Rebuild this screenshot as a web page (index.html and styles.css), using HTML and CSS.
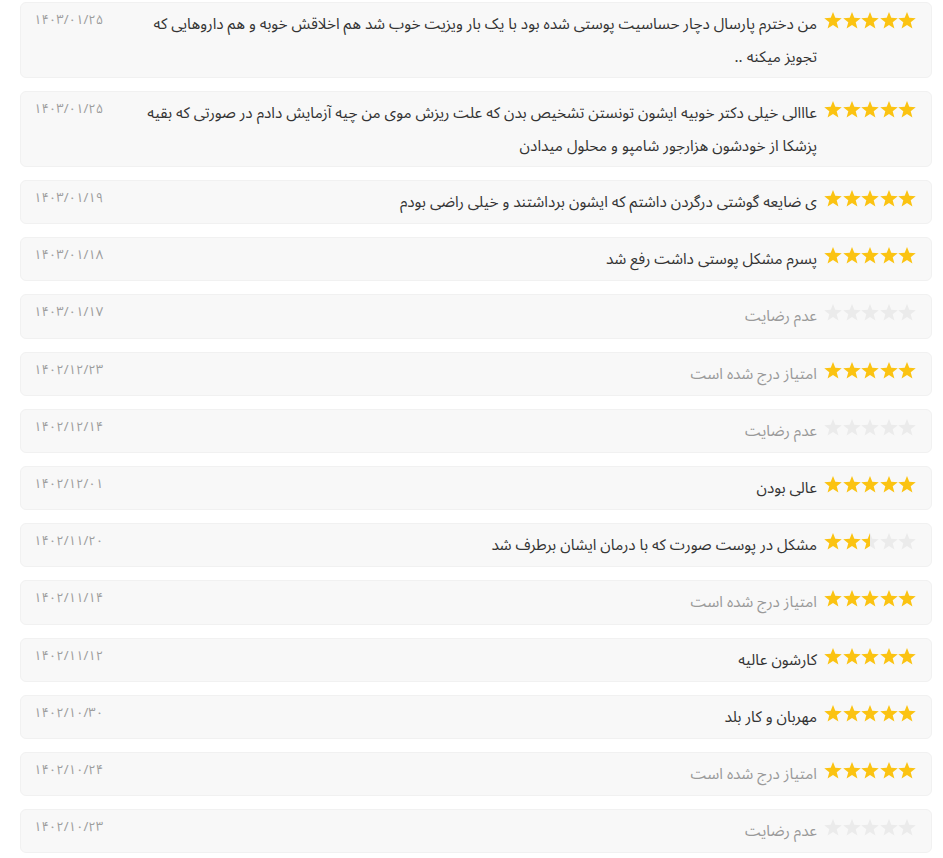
FILE: index.html
```html
<!DOCTYPE html>
<html lang="fa" dir="rtl">
<head>
<meta charset="utf-8">
<title>نظرات</title>
<link rel="stylesheet" href="styles.css">
</head>
<body>
<svg width="0" height="0" class="defs" aria-hidden="true">
  <defs>
    <linearGradient id="half" x1="0" x2="1" y1="0" y2="0">
      <stop offset="50%" stop-color="#fbc312"/>
      <stop offset="50%" stop-color="#ebebeb"/>
    </linearGradient>
    <symbol id="star" viewBox="0 0 18 17">
      <polygon points="9,0 11.29,5.84 17.75,6.16 12.71,10.21 14.41,16.44 9,12.9 3.59,16.44 5.29,10.21 0.25,6.16 6.71,5.84"/>
    </symbol>
  </defs>
</svg>
<main class="reviews">

  <div class="card">
    <div class="stars"><svg class="on"><use href="#star"/></svg><svg class="on"><use href="#star"/></svg><svg class="on"><use href="#star"/></svg><svg class="on"><use href="#star"/></svg><svg class="on"><use href="#star"/></svg></div>
    <p class="text">من دخترم پارسال دچار حساسیت پوستی شده بود با یک بار ویزیت خوب شد هم اخلاقش خوبه و هم داروهایی که<br>تجویز میکنه ..</p>
    <div class="date"><span>۱۴۰۳/۰۱/۲۵</span></div>
  </div>

  <div class="card">
    <div class="stars"><svg class="on"><use href="#star"/></svg><svg class="on"><use href="#star"/></svg><svg class="on"><use href="#star"/></svg><svg class="on"><use href="#star"/></svg><svg class="on"><use href="#star"/></svg></div>
    <p class="text">عااالی خیلی دکتر خوبیه ایشون تونستن تشخیص بدن که علت ریزش موی من چیه آزمایش دادم در صورتی که بقیه<br>پزشکا از خودشون هزارجور شامپو و محلول میدادن</p>
    <div class="date"><span>۱۴۰۳/۰۱/۲۵</span></div>
  </div>

  <div class="card">
    <div class="stars"><svg class="on"><use href="#star"/></svg><svg class="on"><use href="#star"/></svg><svg class="on"><use href="#star"/></svg><svg class="on"><use href="#star"/></svg><svg class="on"><use href="#star"/></svg></div>
    <p class="text">ی ضایعه گوشتی درگردن داشتم که ایشون برداشتند و خیلی راضی بودم</p>
    <div class="date"><span>۱۴۰۳/۰۱/۱۹</span></div>
  </div>

  <div class="card">
    <div class="stars"><svg class="on"><use href="#star"/></svg><svg class="on"><use href="#star"/></svg><svg class="on"><use href="#star"/></svg><svg class="on"><use href="#star"/></svg><svg class="on"><use href="#star"/></svg></div>
    <p class="text">پسرم مشکل پوستی داشت رفع شد</p>
    <div class="date"><span>۱۴۰۳/۰۱/۱۸</span></div>
  </div>

  <div class="card">
    <div class="stars"><svg><use href="#star"/></svg><svg><use href="#star"/></svg><svg><use href="#star"/></svg><svg><use href="#star"/></svg><svg><use href="#star"/></svg></div>
    <p class="text muted">عدم رضایت</p>
    <div class="date"><span>۱۴۰۳/۰۱/۱۷</span></div>
  </div>

  <div class="card">
    <div class="stars"><svg class="on"><use href="#star"/></svg><svg class="on"><use href="#star"/></svg><svg class="on"><use href="#star"/></svg><svg class="on"><use href="#star"/></svg><svg class="on"><use href="#star"/></svg></div>
    <p class="text muted">امتیاز درج شده است</p>
    <div class="date"><span>۱۴۰۲/۱۲/۲۳</span></div>
  </div>

  <div class="card">
    <div class="stars"><svg><use href="#star"/></svg><svg><use href="#star"/></svg><svg><use href="#star"/></svg><svg><use href="#star"/></svg><svg><use href="#star"/></svg></div>
    <p class="text muted">عدم رضایت</p>
    <div class="date"><span>۱۴۰۲/۱۲/۱۴</span></div>
  </div>

  <div class="card">
    <div class="stars"><svg class="on"><use href="#star"/></svg><svg class="on"><use href="#star"/></svg><svg class="on"><use href="#star"/></svg><svg class="on"><use href="#star"/></svg><svg class="on"><use href="#star"/></svg></div>
    <p class="text">عالی بودن</p>
    <div class="date"><span>۱۴۰۲/۱۲/۰۱</span></div>
  </div>

  <div class="card">
    <div class="stars"><svg class="on"><use href="#star"/></svg><svg class="on"><use href="#star"/></svg><svg class="half"><use href="#star"/></svg><svg><use href="#star"/></svg><svg><use href="#star"/></svg></div>
    <p class="text">مشکل در پوست صورت که با درمان ایشان برطرف شد</p>
    <div class="date"><span>۱۴۰۲/۱۱/۲۰</span></div>
  </div>

  <div class="card">
    <div class="stars"><svg class="on"><use href="#star"/></svg><svg class="on"><use href="#star"/></svg><svg class="on"><use href="#star"/></svg><svg class="on"><use href="#star"/></svg><svg class="on"><use href="#star"/></svg></div>
    <p class="text muted">امتیاز درج شده است</p>
    <div class="date"><span>۱۴۰۲/۱۱/۱۴</span></div>
  </div>

  <div class="card">
    <div class="stars"><svg class="on"><use href="#star"/></svg><svg class="on"><use href="#star"/></svg><svg class="on"><use href="#star"/></svg><svg class="on"><use href="#star"/></svg><svg class="on"><use href="#star"/></svg></div>
    <p class="text">کارشون عالیه</p>
    <div class="date"><span>۱۴۰۲/۱۱/۱۲</span></div>
  </div>

  <div class="card">
    <div class="stars"><svg class="on"><use href="#star"/></svg><svg class="on"><use href="#star"/></svg><svg class="on"><use href="#star"/></svg><svg class="on"><use href="#star"/></svg><svg class="on"><use href="#star"/></svg></div>
    <p class="text">مهربان و کار بلد</p>
    <div class="date"><span>۱۴۰۲/۱۰/۳۰</span></div>
  </div>

  <div class="card">
    <div class="stars"><svg class="on"><use href="#star"/></svg><svg class="on"><use href="#star"/></svg><svg class="on"><use href="#star"/></svg><svg class="on"><use href="#star"/></svg><svg class="on"><use href="#star"/></svg></div>
    <p class="text muted">امتیاز درج شده است</p>
    <div class="date"><span>۱۴۰۲/۱۰/۲۴</span></div>
  </div>

  <div class="card">
    <div class="stars"><svg><use href="#star"/></svg><svg><use href="#star"/></svg><svg><use href="#star"/></svg><svg><use href="#star"/></svg><svg><use href="#star"/></svg></div>
    <p class="text muted">عدم رضایت</p>
    <div class="date"><span>۱۴۰۲/۱۰/۲۳</span></div>
  </div>

</main>
</body>
</html>
```

FILE: styles.css
```css
html, body {
  margin: 0;
  padding: 0;
  background: #ffffff;
}

body {
  font-family: "Noto Sans Arabic", "DejaVu Sans", sans-serif;
  color: #333333;
}

.defs {
  position: absolute;
  width: 0;
  height: 0;
  overflow: hidden;
}

.reviews {
  padding: 2px 11px 0 20px;
  display: flex;
  flex-direction: column;
  gap: 13px;
}

.card {
  display: flex;
  align-items: flex-start;
  box-sizing: border-box;
  min-height: 44.2px;
  padding: 5px 15px 3px 13px;
  background: #f8f8f8;
  border: 1px solid #f1f1f1;
  border-radius: 6px;
}

.stars {
  display: flex;
  direction: ltr;
  gap: 0.5px;
  flex-shrink: 0;
  width: 92px;
  margin-top: 4px;
}

.stars svg {
  width: 18px;
  height: 17px;
  fill: #ebebeb;
}

.stars svg.on {
  fill: #fbc312;
}

.stars svg.half {
  fill: url(#half);
}

.text {
  flex: 1;
  margin: 0 7px 0 0;
  font-size: 15.3px;
  line-height: 33px;
  color: #333333;
}

.text.muted {
  color: #9a9a9a;
}

.date {
  flex-shrink: 0;
  width: 82px;
  text-align: left;
  font-size: 13px;
  line-height: 24px;
  color: #9d9d9d;
}

.date span {
  direction: ltr;
  unicode-bidi: isolate;
}
```
